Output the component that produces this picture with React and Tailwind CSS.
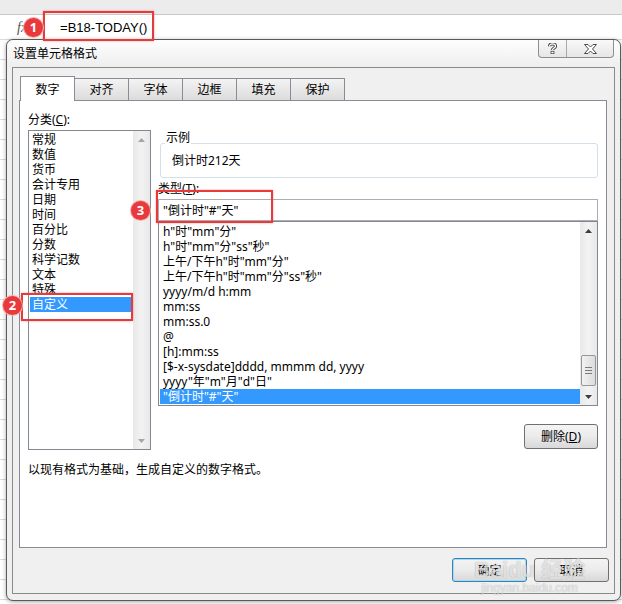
import React from "react";

const categories = ["常规", "数值", "货币", "会计专用", "日期", "时间", "百分比", "分数", "科学记数", "文本", "特殊", "自定义"];

const formats = [
  'h"时"mm"分"',
  'h"时"mm"分"ss"秒"',
  '上午/下午h"时"mm"分"',
  '上午/下午h"时"mm"分"ss"秒"',
  "yyyy/m/d h:mm",
  "mm:ss",
  "mm:ss.0",
  "@",
  "[h]:mm:ss",
  "[$-x-sysdate]dddd, mmmm dd, yyyy",
  'yyyy"年"m"月"d"日"',
  '"倒计时"#"天"',
];

const tabs = ["数字", "对齐", "字体", "边框", "填充", "保护"];

// 小三角箭头
const Arrow = ({ up, color }) => (
  <svg width="7" height="4" viewBox="0 0 7 4">
    <polygon points={up ? "0,4 7,4 3.5,0" : "0,0 7,0 3.5,4"} fill={color} />
  </svg>
);

const Badge = ({ n, className }) => (
  <div
    className={`absolute z-30 w-[19px] h-[19px] rounded-full bg-[#e8393c] ring-1 ring-[#f7b0b0] text-white text-[13px] font-bold leading-none flex items-center justify-center ${className}`}
  >
    {n}
  </div>
);

const WinButton = ({ children, focused }) => (
  <button
    className={`w-[75px] h-[24px] rounded-[3px] border flex items-center justify-center text-[12px] bg-gradient-to-b from-[#f4f4f4] via-[#ebebeb] to-[#d8d8d8] ${
      focused ? "border-[#3c7fb1] shadow-[inset_0_0_0_1px_#9fdcf7]" : "border-[#707070]"
    }`}
  >
    {children}
  </button>
);

export default function App() {
  return (
    <div className="relative w-[622px] h-[604px] overflow-hidden bg-[repeating-linear-gradient(to_bottom,#ffffff_0px,#ffffff_19px,#dadada_19px,#dadada_20px)] font-['Noto_Sans','Noto_Sans_CJK_SC',sans-serif] text-[12px] leading-[15px] text-black">
      {/* 功能区底部 + 编辑栏 */}
      <div className="h-[15px] bg-[#ececec] border-b border-[#c9c9c9]" />
      <div className="h-[24px] bg-white flex items-center">
        <span className="ml-[17px] italic font-['Liberation_Serif',serif] text-[14px] text-[#555]">fx</span>
        <span className="ml-[33px] font-['Liberation_Sans',sans-serif] text-[13px]">=B18-TODAY()</span>
      </div>

      {/* 对话框 */}
      <div className="ml-[6px] w-[615px] h-[562px] flex flex-col border border-[#5a5a5a] rounded-[7px] bg-[#f0f0f0] shadow-[0_1px_4px_rgba(0,0,0,0.35)]">
        <div className="h-[27px] flex items-start justify-between rounded-t-[7px] bg-gradient-to-b from-[#fefefe] to-[#eeeeee]">
          <span className="self-center pl-[6px]">设置单元格格式</span>
          <div className="flex mr-[6px] h-[18px] border border-t-0 border-[#8e8e8e] rounded-b-[4px] bg-gradient-to-b from-[#f9f9f9] to-[#e6e6e6]">
            <div className="w-[28px] border-r border-[#a8a8a8] flex items-center justify-center">
              <svg width="9" height="11" viewBox="0 0 9 11">
                <path d="M1.5 3.2 C1.5 0.2 7.5 0.2 7.5 3.2 C7.5 5 4.5 5 4.5 7" fill="none" stroke="#4a4a4a" strokeWidth="3.2" />
                <path d="M1.5 3.2 C1.5 0.2 7.5 0.2 7.5 3.2 C7.5 5 4.5 5 4.5 7" fill="none" stroke="#ffffff" strokeWidth="1.2" />
                <rect x="3" y="8.3" width="3" height="2.4" fill="#ffffff" stroke="#4a4a4a" strokeWidth="0.8" />
              </svg>
            </div>
            <div className="w-[46px] flex items-center justify-center">
              <svg width="13" height="10" viewBox="0 0 13 10">
                <polygon
                  points="0.5,0.5 4,0.5 6.5,3 9,0.5 12.5,0.5 8.5,5 12.5,9.5 9,9.5 6.5,7 4,9.5 0.5,9.5 4.5,5"
                  fill="#ffffff"
                  stroke="#4a4a4a"
                  strokeWidth="1"
                />
              </svg>
            </div>
          </div>
        </div>

        <div className="mx-[5px] mb-[6px] flex-1 flex flex-col border border-[#8a8a8a] bg-[#f0f0f0]">
          {/* 选项卡 */}
          <div className="mt-[8px] ml-[6px] pl-[1px] h-[24px] flex items-end">
            {tabs.map((t, i) =>
              i === 0 ? (
                <div
                  key={t}
                  className="relative z-10 -mb-px w-[55px] h-[25px] bg-white border border-b-0 border-[#898c95] flex items-center justify-center"
                >
                  {t}
                </div>
              ) : (
                <div
                  key={t}
                  className="-ml-px w-[55px] h-[22px] border border-b-0 border-[#898c95] bg-gradient-to-b from-[#f3f3f3] to-[#dcdcdc] flex items-center justify-center"
                >
                  {t}
                </div>
              )
            )}
          </div>

          {/* 面板 */}
          <div className="ml-[6px] mr-[7px] h-[448px] border border-[#898c95] bg-white flex flex-col">
            <div className="flex">
              {/* 分类 */}
              <div className="ml-[8px] mt-[11px] w-[123px] flex flex-col">
                <span>
                  分类(<span className="underline">C</span>):
                </span>
                <div className="mt-[3px] h-[320px] border border-[#828790] flex">
                  <div className="flex-1 pt-[1px] flex flex-col">
                    {categories.map((c) =>
                      c === "自定义" ? (
                        <div key={c} className="ml-[1px] mr-[1px] pl-[2px] h-[15px] bg-[#3399ff] text-white">
                          {c}
                        </div>
                      ) : (
                        <div key={c} className="ml-[1px] pl-[2px] h-[15px]">
                          {c}
                        </div>
                      )
                    )}
                  </div>
                  <div className="w-[17px] flex flex-col justify-between bg-gradient-to-r from-[#e8e8e8] via-[#f2f2f2] to-[#e8e8e8]">
                    <div className="h-[17px] flex items-center justify-center">
                      <Arrow up color="#a6a6a6" />
                    </div>
                    <div className="h-[17px] flex items-center justify-center">
                      <Arrow color="#a6a6a6" />
                    </div>
                  </div>
                </div>
              </div>

              {/* 右侧 */}
              <div className="ml-[7px] w-[440px] flex flex-col">
                <div className="relative mt-[42px] ml-[2px] h-[35px] rounded-[3px] border border-[#d5dfe5] flex items-center pl-[11px]">
                  <span className="absolute -top-[14px] left-[4px] bg-white px-[1px]">示例</span>
                  倒计时212天
                </div>
                <span className="mt-[3px]">
                  类型(<span className="underline">T</span>):
                </span>
                <div className="mt-[3px] h-[22px] border border-[#abadb3] flex items-center pl-[4px]">"倒计时"#"天"</div>
                <div className="h-[185px] border border-[#828790] flex">
                  <div className="flex-1 pt-[2px] flex flex-col">
                    {formats.map((f, i) =>
                      i === formats.length - 1 ? (
                        <div key={f} className="ml-[1px] pl-[3px] h-[15px] bg-[#3399ff] text-white">
                          {f}
                        </div>
                      ) : (
                        <div key={f} className="ml-[1px] pl-[3px] h-[15px] whitespace-nowrap">
                          {f}
                        </div>
                      )
                    )}
                  </div>
                  <div className="w-[17px] flex flex-col bg-gradient-to-r from-[#e8e8e8] via-[#f3f3f3] to-[#e8e8e8]">
                    <div className="h-[17px] flex items-center justify-center">
                      <Arrow up color="#3d3d3d" />
                    </div>
                    <div className="flex-1 flex flex-col justify-end pb-[2px] items-center">
                      <div className="w-[15px] h-[31px] rounded-[2px] border border-[#979797] bg-gradient-to-r from-[#f2f2f2] to-[#dcdcdc] flex flex-col items-center justify-center gap-[2px]">
                        <div className="w-[7px] h-px bg-[#7a7a7a]" />
                        <div className="w-[7px] h-px bg-[#7a7a7a]" />
                        <div className="w-[7px] h-px bg-[#7a7a7a]" />
                      </div>
                    </div>
                    <div className="h-[17px] flex items-center justify-center">
                      <Arrow color="#3d3d3d" />
                    </div>
                  </div>
                </div>
                <div className="self-end mt-[18px]">
                  <button className="w-[74px] h-[25px] rounded-[3px] border border-[#707070] bg-gradient-to-b from-[#f4f4f4] via-[#ebebeb] to-[#d8d8d8] flex items-center justify-center">
                    删除(<span className="underline">D</span>)
                  </button>
                </div>
              </div>
            </div>
            <p className="ml-[8px] mt-[12px]">以现有格式为基础，生成自定义的数字格式。</p>
          </div>

          {/* 底部按钮 */}
          <div className="mt-[10px] mr-[5px] flex justify-end gap-[7px]">
            <WinButton focused>确定</WinButton>
            <WinButton>取消</WinButton>
          </div>
        </div>
      </div>

      {/* 标注 */}
      <div className="absolute z-20 left-[43px] top-[11px] w-[111px] h-[30px] border-2 border-[#e63b3b] shadow-[0_0_2px_rgba(230,59,59,0.5)]" />
      <Badge n="1" className="left-[24px] top-[18px]" />
      <div className="absolute z-20 left-[21px] top-[293px] w-[112px] h-[28px] border-2 border-[#e63b3b] shadow-[0_0_2px_rgba(230,59,59,0.5)]" />
      <Badge n="2" className="left-[3px] top-[296px]" />
      <div className="absolute z-20 left-[156px] top-[190px] w-[117px] h-[33px] border-2 border-[#e63b3b] shadow-[0_0_2px_rgba(230,59,59,0.5)]" />
      <Badge n="3" className="left-[131px] top-[201px]" />

      {/* 水印 */}
      <div className="absolute z-20 left-[474px] top-[558px] flex flex-col items-center text-white/70 [text-shadow:0_0_1px_rgba(0,0,0,0.35)] pointer-events-none">
        <span className="text-[22px] leading-[24px] font-bold font-['Liberation_Sans','Noto_Sans_CJK_SC',sans-serif]">Baidu 经验</span>
        <span className="text-[12px] leading-[13px] font-['Liberation_Sans',sans-serif]">jingyan.baidu.com</span>
      </div>
    </div>
  );
}
